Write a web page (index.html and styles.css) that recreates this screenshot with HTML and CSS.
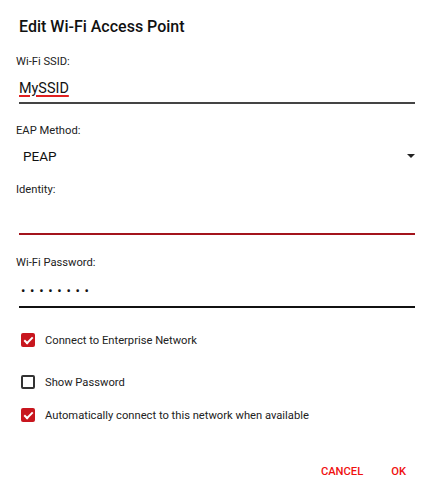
FILE: index.html
```html
<!DOCTYPE html>
<html lang="en">
   <head>
      <meta charset="UTF-8">
      <meta name="viewport" content="width=device-width, initial-scale=1.0">
      <title>Edit Wi-Fi Access Point</title>
      <link rel="stylesheet" href="styles.css">
   </head>
   <body>
      <div class="dialog">
         <h2 class="title">Edit Wi-Fi Access Point</h2>

         <div class="field">
            <div class="label">Wi-Fi SSID:</div>
            <div class="input"><span class="misspelled">MySSID</span></div>
         </div>

         <div class="field">
            <div class="label">EAP Method:</div>
            <div class="select">
               <span>PEAP</span>
               <span class="arrow"></span>
            </div>
         </div>

         <div class="field">
            <div class="label">Identity:</div>
            <div class="input identity"></div>
         </div>

         <div class="field">
            <div class="label">Wi-Fi Password:</div>
            <div class="input password">&#8226;&#8226;&#8226;&#8226;&#8226;&#8226;&#8226;&#8226;</div>
         </div>

         <div class="checks">
            <label class="check"><span class="box checked"></span>Connect to Enterprise Network</label>
            <label class="check show"><span class="box"></span>Show Password</label>
            <label class="check auto"><span class="box checked"></span>Automatically connect to this network when available</label>
         </div>

         <div class="actions">
            <button>CANCEL</button>
            <button>OK</button>
         </div>
      </div>
   </body>
</html>
```

FILE: styles.css
```css
/* Dialog styling */
body {
font-family: Roboto, "Liberation Sans", sans-serif;
background-color: white;
color: #1a1a1a;
margin: 0;
}
.dialog {
padding: 16px 19px 0 16px;
}
.title {
font-size: 16px;
font-weight: 500;
margin: 0 0 16px 3px;
line-height: 22px;
color: #111;
}
.label {
font-size: 11.2px;
line-height: 16px;
color: #222;
}
.input {
margin: 0 0 19px 3px;
padding: 9px 0 3px 0;
line-height: 20px;
height: 20px;
border-bottom: 2px solid #444;
font-size: 14.4px;
color: #111;
}
.misspelled {
text-decoration: underline;
text-decoration-color: #e02020;
text-decoration-thickness: 1.5px;
text-underline-offset: 2px;
}
.identity {
height: 23px;
border-bottom-color: #a3141c;
margin-bottom: 20px;
}
.password {
padding: 10px 0 5px 2px;
font-size: 13px;
letter-spacing: 4.7px;
border-bottom-color: #111;
}
.select {
display: flex;
justify-content: space-between;
height: 36px;
padding-top: 7px;
line-height: 20px;
margin-left: 7px;
font-size: 13.5px;
color: #111;
}
.arrow {
width: 0;
height: 0;
border-left: 4px solid transparent;
border-right: 4px solid transparent;
border-top: 4px solid #222;
margin-top: 8px;
}
.checks {
margin-top: 25px;
margin-left: 5px;
}
.check {
display: flex;
align-items: center;
font-size: 11.2px;
color: #222;
height: 14px;
}
.check.show {
margin-top: 28px;
}
.check.auto {
margin-top: 19px;
}
.box {
width: 14px;
height: 14px;
box-sizing: border-box;
border: 2px solid #333;
border-radius: 2px;
margin-right: 10px;
}
.box.checked {
border: none;
background-color: #c8161e;
position: relative;
}
.box.checked::after {
content: "";
position: absolute;
left: 5px;
top: 2px;
width: 3px;
height: 7px;
border: solid white;
border-width: 0 2px 2px 0;
transform: rotate(45deg);
}
.actions {
display: flex;
justify-content: flex-end;
gap: 28px;
margin-top: 42px;
padding-right: 9px;
}
button {
background: none;
border: none;
padding: 0;
line-height: 16px;
font-family: Roboto, "Liberation Sans", sans-serif;
font-size: 11.2px;
font-weight: 500;
color: #f01010;
}
```
